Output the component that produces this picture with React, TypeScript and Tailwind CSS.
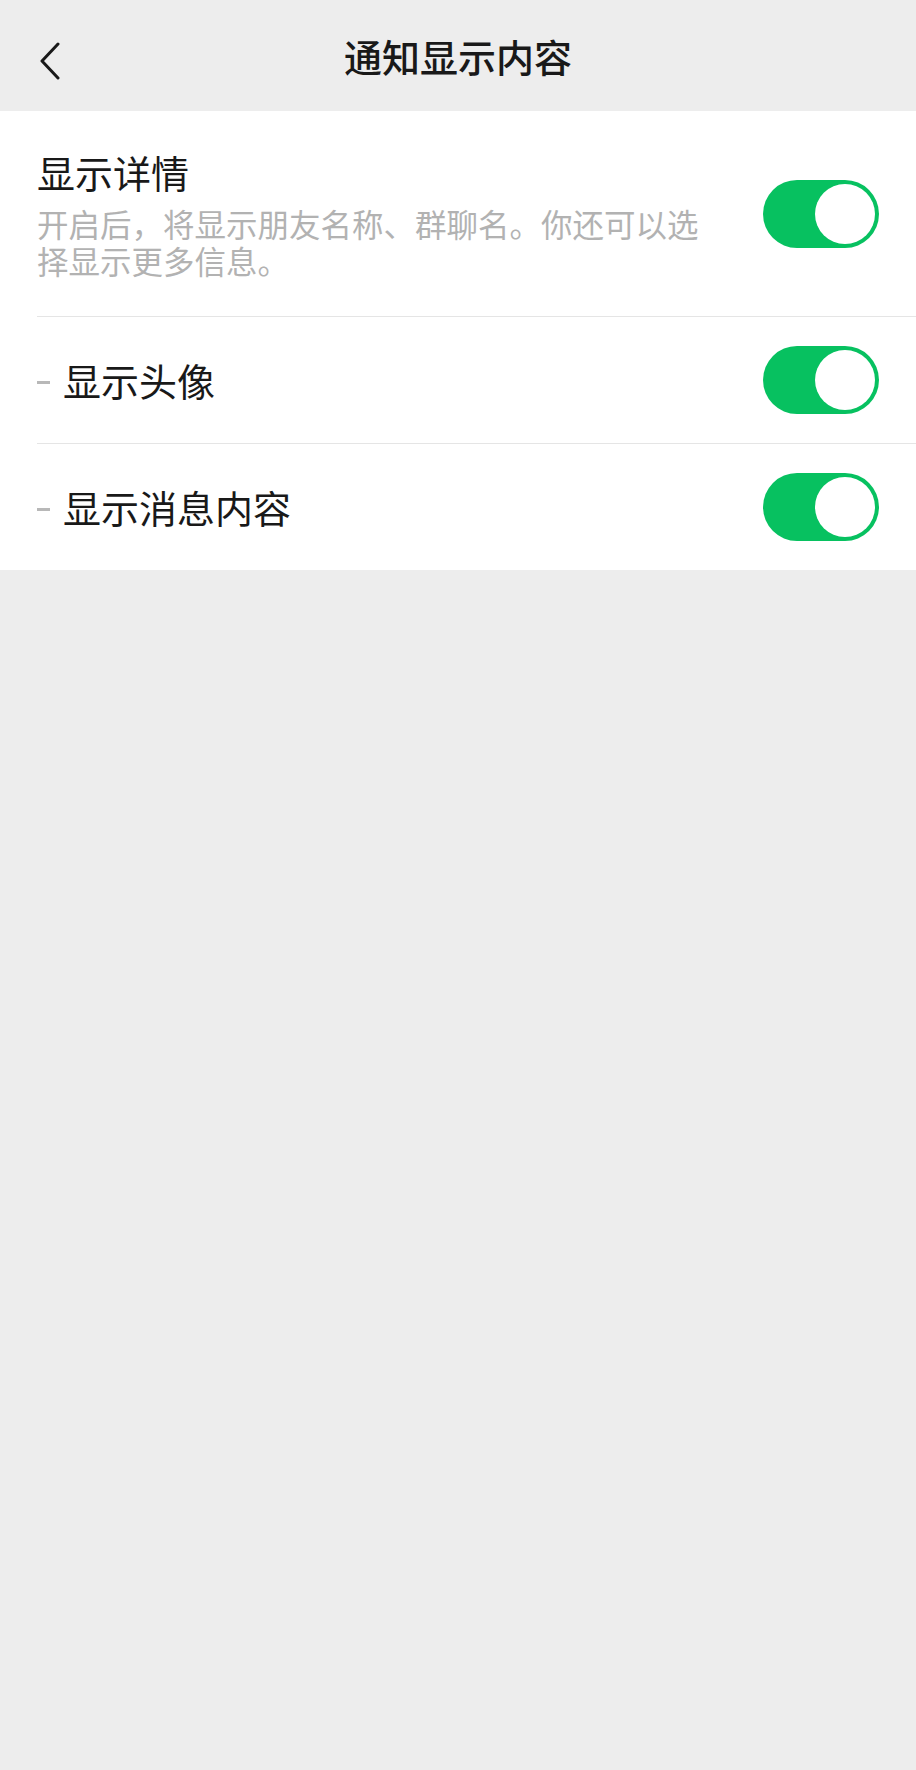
import React from "react";

const FONT = '"Noto Sans CJK SC", "Noto Sans", sans-serif';

function Toggle() {
  return (
    <div className="flex h-[68px] w-[116px] shrink-0 items-center justify-end rounded-full bg-[#07c160] p-[4px]">
      <div className="h-[60px] w-[60px] rounded-full bg-white" />
    </div>
  );
}

function Divider() {
  return <div className="ml-[37px] h-px bg-[#e5e5e5]" />;
}

function SubRow({ label }: { label: string }) {
  return (
    <div className="flex h-[126px] items-center justify-between px-[37px]">
      <div className="flex items-center">
        <span className="mr-[13px] mt-[4px] h-[3px] w-[13px] bg-[#b8b8b8]" />
        <span className="text-[38px] leading-[48px] text-[#191919]">{label}</span>
      </div>
      <Toggle />
    </div>
  );
}

export default function App() {
  return (
    <div className="min-h-[1770px] w-full bg-[#ededed]" style={{ fontFamily: FONT }}>
      <header className="relative flex h-[111px] items-center justify-center">
        <button className="absolute left-[38px] top-[42px] flex h-[38px] w-[24px] items-center">
          <svg width="24" height="38" viewBox="0 0 24 38" fill="none">
            <path d="M20 2 L4 19 L20 36" stroke="#191919" strokeWidth="3" strokeLinecap="round" strokeLinejoin="round" />
          </svg>
        </button>
        <h1 className="text-[38px] font-medium leading-[48px] text-[#191919]">通知显示内容</h1>
      </header>

      <section className="bg-white">
        <div className="flex items-center justify-between px-[37px] py-[37px]">
          <div className="max-w-[680px]">
            <div className="text-[38px] leading-[48px] text-[#191919]">显示详情</div>
            <div className="mt-[9px] text-[31.5px] leading-[37px] text-[#b2b2b2]">
              开启后，将显示朋友名称、群聊名。你还可以选择显示更多信息。
            </div>
          </div>
          <Toggle />
        </div>
        <Divider />
        <SubRow label="显示头像" />
        <Divider />
        <SubRow label="显示消息内容" />
      </section>
    </div>
  );
}
